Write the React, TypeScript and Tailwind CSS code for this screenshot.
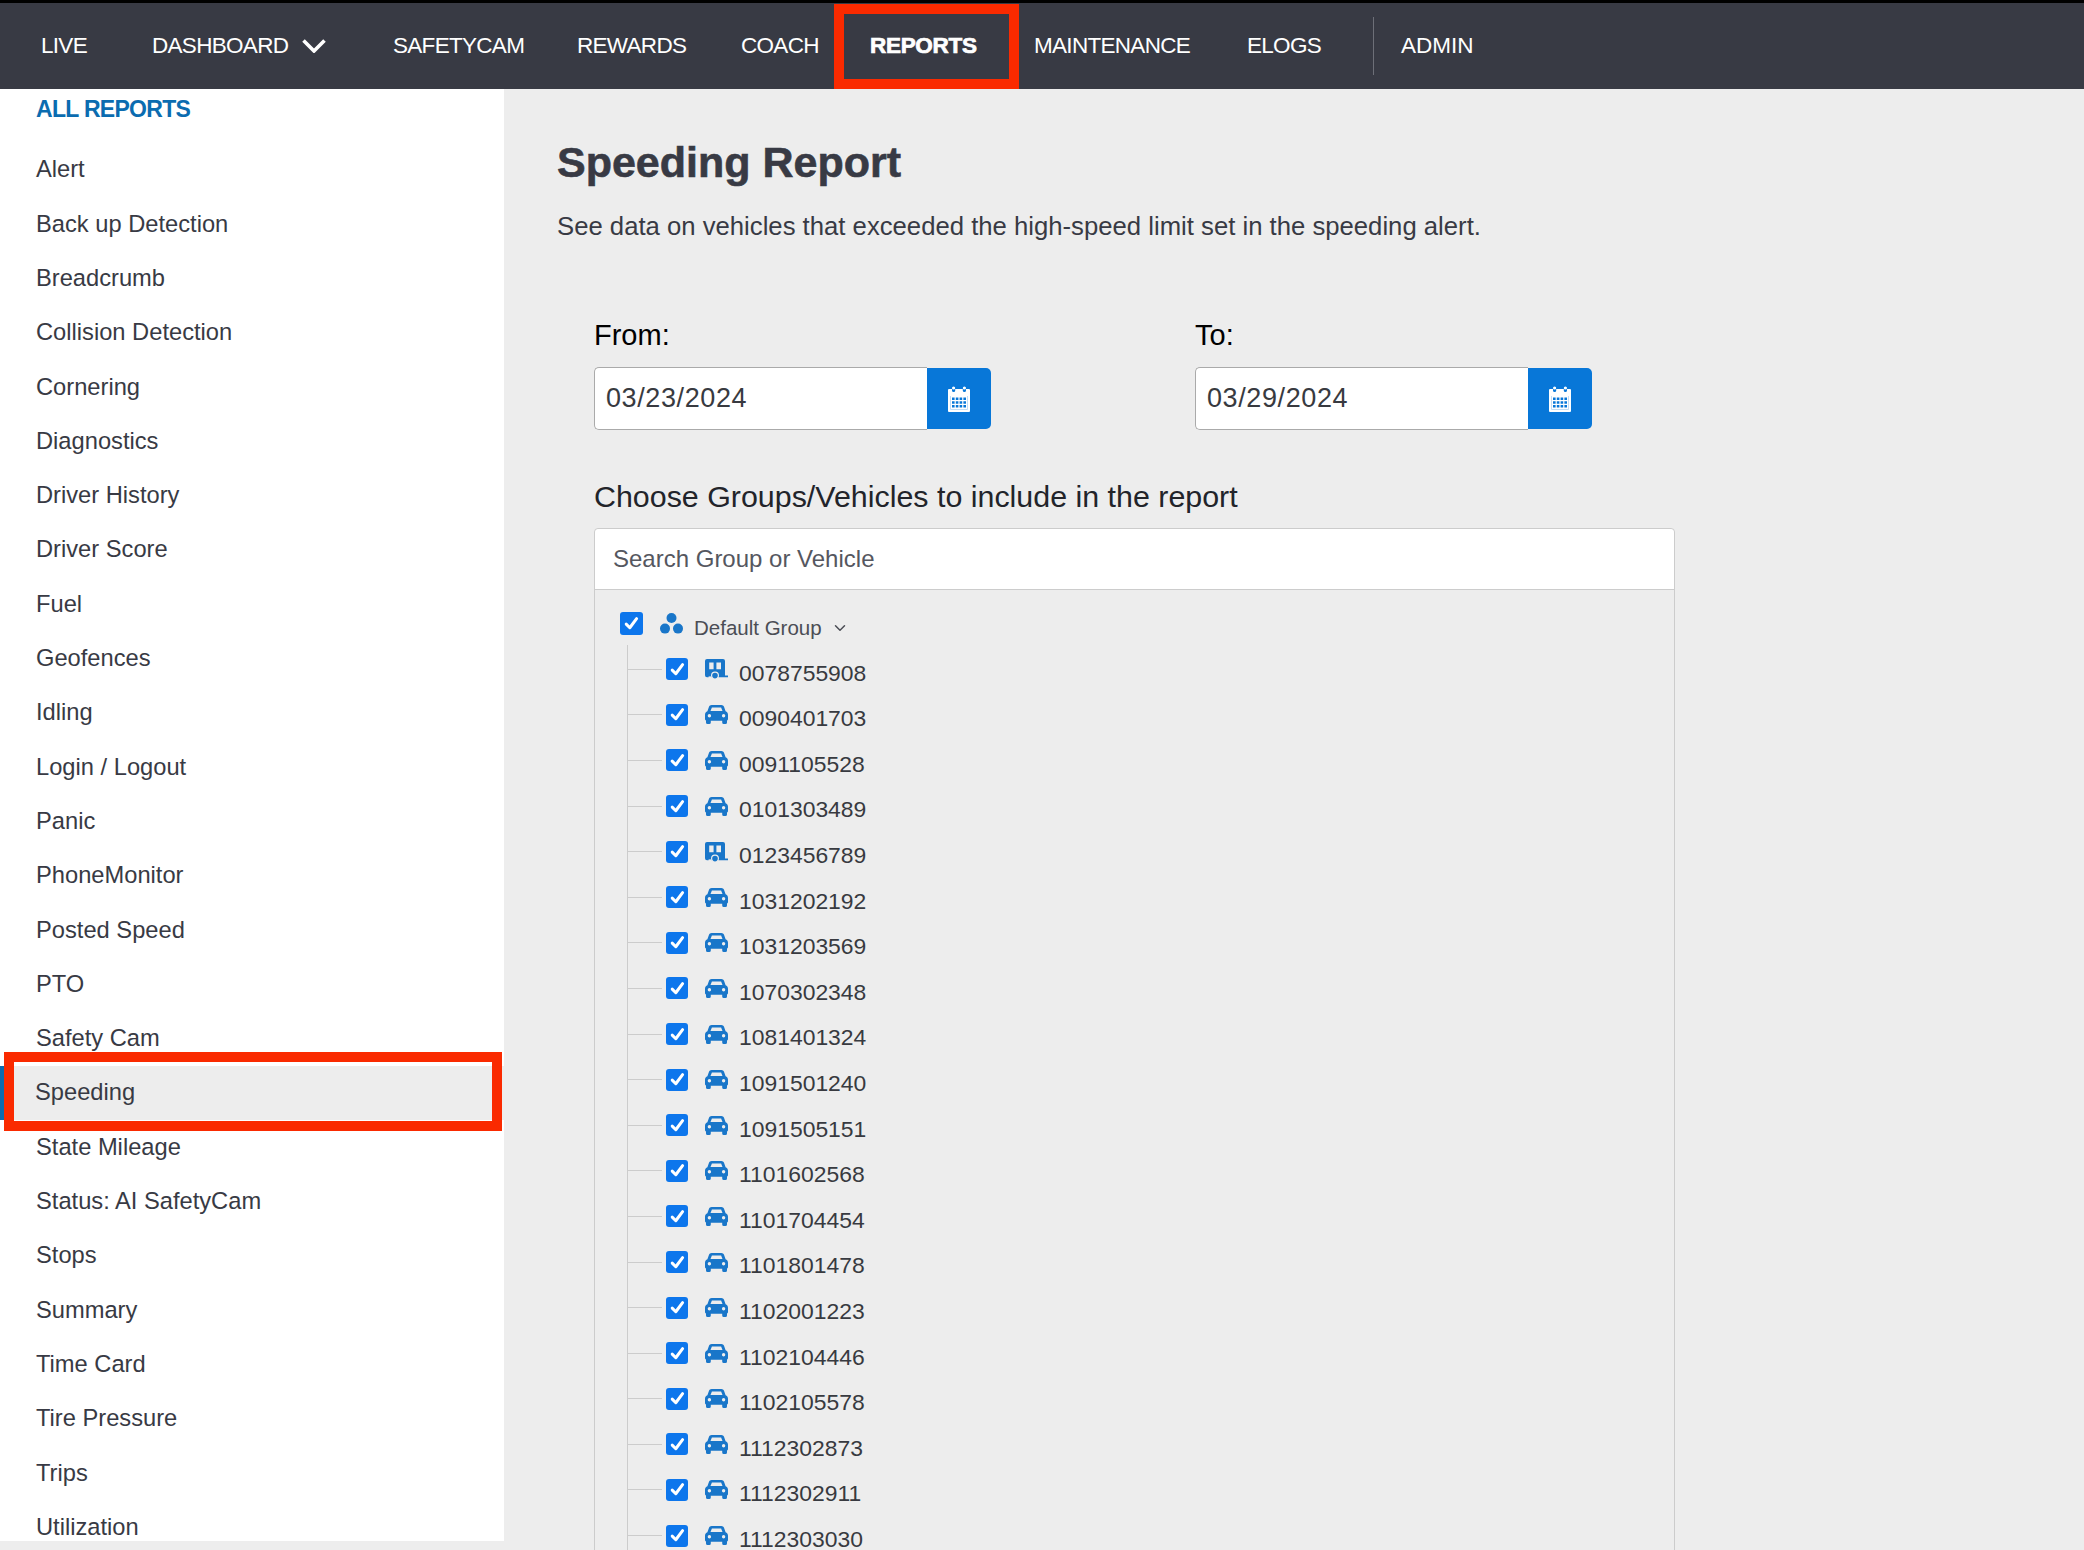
import { ChevronDown } from "lucide-react"

const font = "font-['Liberation_Sans',Arial,sans-serif]"

const navItems = [
  { label: "SAFETYCAM", className: "w-[184px]" },
  { label: "REWARDS", className: "w-[164px]" },
  { label: "COACH", className: "w-[129px]" },
]

const navItemsAfter = [
  { label: "MAINTENANCE", className: "w-[213px]" },
  { label: "ELOGS", className: "w-[126px]" },
]

const reports = [
  "Alert",
  "Back up Detection",
  "Breadcrumb",
  "Collision Detection",
  "Cornering",
  "Diagnostics",
  "Driver History",
  "Driver Score",
  "Fuel",
  "Geofences",
  "Idling",
  "Login / Logout",
  "Panic",
  "PhoneMonitor",
  "Posted Speed",
  "PTO",
  "Safety Cam",
  "Speeding",
  "State Mileage",
  "Status: AI SafetyCam",
  "Stops",
  "Summary",
  "Time Card",
  "Tire Pressure",
  "Trips",
  "Utilization",
]

const vehicles = [
  { id: "0078755908", trailer: true },
  { id: "0090401703" },
  { id: "0091105528" },
  { id: "0101303489" },
  { id: "0123456789", trailer: true },
  { id: "1031202192" },
  { id: "1031203569" },
  { id: "1070302348" },
  { id: "1081401324" },
  { id: "1091501240" },
  { id: "1091505151" },
  { id: "1101602568" },
  { id: "1101704454" },
  { id: "1101801478" },
  { id: "1102001223" },
  { id: "1102104446" },
  { id: "1102105578" },
  { id: "1112302873" },
  { id: "1112302911" },
  { id: "1112303030" },
]

function CheckBox({ big }: { big?: boolean }) {
  return (
    <span className={`flex shrink-0 items-center justify-center rounded-[3px] bg-[#0d76ec] ${big ? "h-[23px] w-[23px]" : "h-[22px] w-[22px]"}`}>
      <svg viewBox="0 0 16 16" className="h-[17px] w-[17px]" fill="none" stroke="white" strokeWidth="2.8" strokeLinecap="round" strokeLinejoin="round">
        <path d="M3 8.6 6.4 12 12.8 3.4" />
      </svg>
    </span>
  )
}

function CarIcon() {
  return (
    <svg viewBox="0 0 23 19" className="h-[19px] w-[23px] shrink-0 text-[#1976c9]" fill="currentColor">
      <path fillRule="evenodd" d="M6.6 0h9.8c1.2 0 2.2.7 2.6 1.8L20.6 6.2c1.4.6 2.4 1.9 2.4 3.5V14a1.6 1.6 0 0 1-1 1.5v1.9a1.6 1.6 0 0 1-1.6 1.6h-1.6a1.6 1.6 0 0 1-1.6-1.6v-1.6H5.8v1.6A1.6 1.6 0 0 1 4.2 19H2.6A1.6 1.6 0 0 1 1 17.4v-1.9A1.6 1.6 0 0 1 0 14V9.7c0-1.6 1-2.9 2.4-3.5L4 1.8C4.4.7 5.4 0 6.6 0Zm.3 2.6L5.5 6h12l-1.4-3.4H6.9ZM4.4 9a1.7 1.7 0 1 0 0 3.4 1.7 1.7 0 0 0 0-3.4Zm14.2 0a1.7 1.7 0 1 0 0 3.4 1.7 1.7 0 0 0 0-3.4Z" />
    </svg>
  )
}

function TrailerIcon() {
  return (
    <svg viewBox="0 0 23 20" className="h-[20px] w-[23px] shrink-0 text-[#1976c9]" fill="currentColor">
      <path fillRule="evenodd" d="M2 0h16a2 2 0 0 1 2 2v14.6h3v1.6H2a2 2 0 0 1-2-2V2a2 2 0 0 1 2-2Zm2.2 3.6v6.6h4.4V3.6H4.2Zm7.2 0v6.6h4.6V3.6h-4.6Z" />
      <path d="M3.6 17.4h2.8v2.6H3.6z" fill="#ededed" />
      <circle cx="10" cy="16.6" r="3.4" stroke="#ededed" strokeWidth="1.2" />
    </svg>
  )
}

function GroupIcon() {
  return (
    <svg viewBox="0 0 23 21" className="h-[21px] w-[23px] shrink-0 text-[#1976c9]" fill="currentColor">
      <circle cx="11.5" cy="5" r="5" />
      <circle cx="5" cy="15.6" r="5" />
      <circle cx="18" cy="15.6" r="5" />
    </svg>
  )
}

function CalendarIcon() {
  return (
    <svg viewBox="0 0 24 26" className="h-[26px] w-[24px]" fill="white">
      <path fillRule="evenodd" d="M2 3h3v1.5a1.6 1.6 0 0 0 3.2 0V3h7.6v1.5a1.6 1.6 0 0 0 3.2 0V3h3a1 1 0 0 1 1 1v21a1 1 0 0 1-1 1H2a1 1 0 0 1-1-1V4a1 1 0 0 1 1-1Zm1.5 7v13.5h17V10h-17Z" />
      <circle cx="6.6" cy="2" r="1.6" />
      <circle cx="17.4" cy="2" r="1.6" />
      <path d="M3.5 10h17v13.5h-17zM5 11.5V14h2.6v-2.5zm3.8 0V14h2.6v-2.5zm3.8 0V14h2.6v-2.5zm3.8 0V14H19v-2.5zM5 15.3v2.4h2.6v-2.4zm3.8 0v2.4h2.6v-2.4zm3.8 0v2.4h2.6v-2.4zm3.8 0v2.4H19v-2.4zM5 19v2.5h2.6V19zm3.8 0v2.5h2.6V19zm3.8 0v2.5h2.6V19zm3.8 0v2.5H19V19z" fillRule="evenodd" />
    </svg>
  )
}

function DateField({ label, value, className }: { label: string; value: string; className?: string }) {
  return (
    <div className={className}>
      <div className="text-[29px] leading-[34px] text-black">{label}</div>
      <div className="mt-[15px] flex h-[63px]">
        <div className="flex w-[333px] items-center rounded-l-[5px] border border-r-0 border-[#aaaaaa] bg-white pl-[11px] text-[27px] tracking-[0.6px] text-[#383a40]">
          {value}
        </div>
        <div className="my-px flex w-[64px] items-center justify-center rounded-r-[5px] bg-[#0877d8]">
          <CalendarIcon />
        </div>
      </div>
    </div>
  )
}

export default function App() {
  return (
    <div className={`h-[1550px] w-[2084px] overflow-hidden bg-[#ededed] ${font}`}>
      {/* Top nav */}
      <nav className="relative flex h-[89px] items-center border-t-[3px] border-black bg-[#383a44] pl-[41px] text-[22.5px] tracking-[-0.7px] text-white">
        <span className="w-[111px]">LIVE</span>
        <span className="flex w-[241px] items-center gap-[14px]">
          DASHBOARD
          <svg viewBox="0 0 24 14" className="h-[14px] w-[24px]" fill="none" stroke="white" strokeWidth="3.6">
            <path d="M1.5 1.5 12 12 22.5 1.5" />
          </svg>
        </span>
        {navItems.map((item) => (
          <span key={item.label} className={item.className}>
            {item.label}
          </span>
        ))}
        <span className="w-[164px] font-bold tracking-[-0.3px] [-webkit-text-stroke:0.7px_white]">REPORTS</span>
        {navItemsAfter.map((item) => (
          <span key={item.label} className={item.className}>
            {item.label}
          </span>
        ))}
        <span className="mr-[27px] h-[58px] w-px bg-[#6d6f78]" />
        <span className="tracking-normal">ADMIN</span>
        <div className="absolute top-px left-[834px] h-[85px] w-[185px] border-[10px] border-[#fa2a00]" />
      </nav>

      <div className="flex items-start">
        {/* Report list */}
        <aside className="relative h-[1452px] w-[504px] shrink-0 bg-white">
          <div className="pt-[5px] pl-[36px] text-[23px] leading-[30px] font-bold tracking-[-0.7px] text-[#0b6cb0]">ALL REPORTS</div>
          <ul className="mt-[19px]">
            {reports.map((report) => (
              <li
                key={report}
                className={`flex h-[54.3px] items-center text-[23.7px] text-[#383a44] ${
                  report === "Speeding" ? "border-l-[4px] border-[#0b6cb0] bg-[#ededed] pl-[31px]" : "pl-[36px]"
                }`}
              >
                {report}
              </li>
            ))}
          </ul>
          <div className="absolute top-[963px] left-[4px] h-[79px] w-[498px] border-[10px] border-[#fa2a00]" />
        </aside>

        {/* Report form */}
        <main className="min-w-0 flex-1 pt-[48px] pl-[53px]">
          <h1 className="text-[43px] leading-[50px] font-bold text-[#383a44] [-webkit-text-stroke:0.6px_#383a44]">Speeding Report</h1>
          <p className="mt-[24px] text-[25.7px] leading-[30px] text-[#383a44]">
            See data on vehicles that exceeded the high-speed limit set in the speeding alert.
          </p>

          <div className="mt-[77px] ml-[37px]">
            <div className="flex">
              <DateField label="From:" value="03/23/2024" className="w-[601px]" />
              <DateField label="To:" value="03/29/2024" />
            </div>

            <div className="mt-[49px] text-[30.4px] leading-[34px] text-[#22242a]">
              Choose Groups/Vehicles to include in the report
            </div>

            <div className="mt-[15px] h-[1100px] w-[1081px] rounded-t-[4px] border border-[#cccccc]">
              <div className="flex h-[61px] items-center rounded-t-[4px] border-b border-[#cccccc] bg-white pl-[18px] text-[24px] text-[#555760]">
                Search Group or Vehicle
              </div>

              <div className="pt-[26px] pl-[25px]">
                <div className="flex h-[24px] items-center">
                  <span className="mb-[10px]"><CheckBox big /></span>
                  <span className="mb-[10px] ml-[17px]"><GroupIcon /></span>
                  <span className="ml-[11px] text-[20.5px] text-[#4b4d55]">Default Group</span>
                  <ChevronDown className="ml-[9px] h-[18px] w-[18px] text-[#4b4d55]" strokeWidth={2} />
                </div>

                <ul className="mt-[5px] ml-[7px] border-l border-[#cccccc] pt-[1.5px]">
                  {vehicles.map((vehicle) => (
                    <li key={vehicle.id} className="flex h-[45.6px] items-center">
                      <span className="h-px w-[34px] bg-[#cccccc]" />
                      <span className="ml-[4px]"><CheckBox /></span>
                      <span className="ml-[17px] w-[34px]">
                        {vehicle.trailer ? <TrailerIcon /> : <CarIcon />}
                      </span>
                      <span className="mt-[7px] text-[22.9px] text-[#383a40]">{vehicle.id}</span>
                    </li>
                  ))}
                </ul>
              </div>
            </div>
          </div>
        </main>
      </div>
    </div>
  )
}
